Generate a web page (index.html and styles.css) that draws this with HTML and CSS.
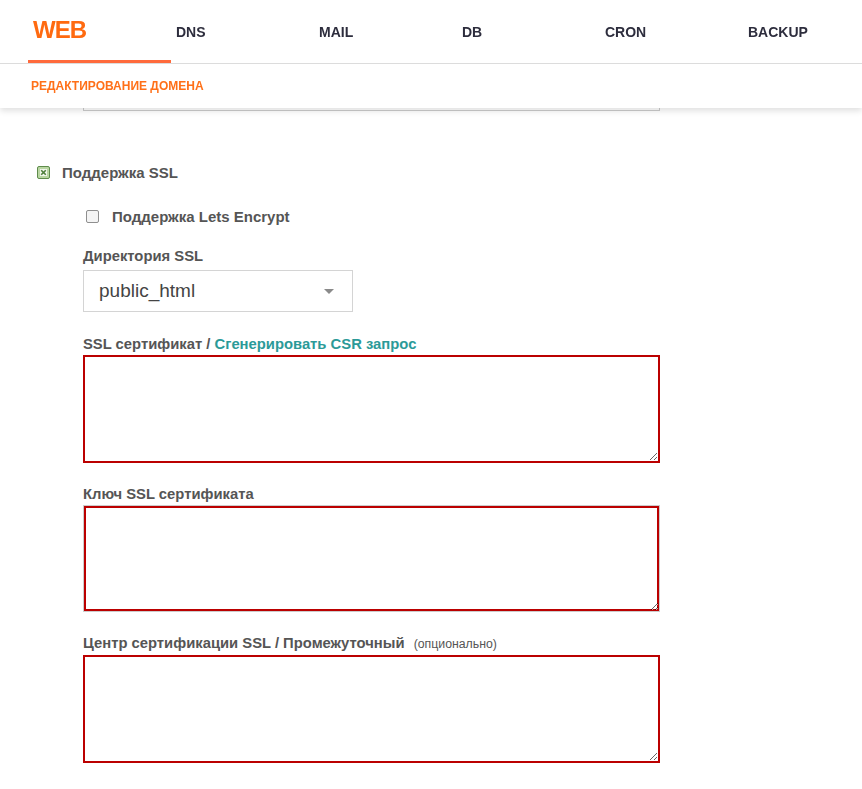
FILE: index.html
```html
<!DOCTYPE html>
<html>
<head>
  <meta charset="utf-8">
  <link rel="stylesheet" href="styles.css">
</head>
<body>
  <div class="header">
    <div class="tabs">
      <a class="tab active">WEB</a>
      <a class="tab">DNS</a>
      <a class="tab">MAIL</a>
      <a class="tab">DB</a>
      <a class="tab">CRON</a>
      <a class="tab">BACKUP</a>
    </div>
    <div class="subtitle">Редактирование домена</div>
  </div>

  <div class="content">
    <textarea class="field ghost"></textarea>

    <div class="check-row">
      <span class="check-green">
        <svg width="13" height="13" viewBox="0 0 13 13">
          <rect x="0.5" y="0.5" width="12" height="12" rx="1.5" fill="#b9d6a2" stroke="#5f8c4c"/>
          <rect x="3" y="3" width="7" height="7" fill="#f2f7ee"/>
          <path d="M4.2 4.2 L8.8 8.8 M8.8 4.2 L4.2 8.8" stroke="#4f7f3c" stroke-width="1.6"/>
        </svg>
      </span>
      <span class="check-label">Поддержка SSL</span>
    </div>

    <div class="ssl-box">
      <div class="check-row sub">
        <span class="check-empty"></span>
        <span class="check-label">Поддержка Lets Encrypt</span>
      </div>

      <div class="label first">Директория SSL</div>
      <div class="select">
        <span>public_html</span>
        <span class="caret"></span>
      </div>

      <div class="label after-select">SSL сертификат / <a class="link">Сгенерировать CSR запрос</a></div>
      <textarea class="field error"></textarea>

      <div class="label">Ключ SSL сертификата</div>
      <textarea class="field error-inset"></textarea>

      <div class="label">Центр сертификации SSL / Промежуточный <span class="optional">(опционально)</span></div>
      <textarea class="field error"></textarea>
    </div>
  </div>
</body>
</html>
```

FILE: styles.css
```css
body {
  margin: 0;
  font-family: "Liberation Sans", Arial, sans-serif;
  background: white;
  color: #555;
}

.header {
  position: fixed;
  top: 0;
  left: 0;
  right: 0;
  background: white;
  box-shadow: 0 3px 6px rgba(0, 0, 0, 0.12);
  z-index: 2;
}

.tabs {
  display: flex;
  padding-left: 28px;
  height: 63px;
  border-bottom: 1px solid #dcdcdc;
}

.tab {
  flex-shrink: 0;
  box-sizing: border-box;
  width: 143px;
  padding-left: 5px;
  line-height: 64px;
  font-size: 14px;
  font-weight: bold;
  color: #2d2d3d;
}

.tab.active {
  font-size: 24px;
  letter-spacing: -1px;
  color: #ff6a10;
  line-height: 60px;
  border-bottom: 3px solid #ff6a3c;
}

.subtitle {
  height: 44px;
  line-height: 44px;
  padding-left: 31px;
  font-size: 12px;
  font-weight: bold;
  text-transform: uppercase;
  color: #ff7018;
}

.content {
  padding-bottom: 40px;
}

.field {
  display: block;
  box-sizing: border-box;
  width: 577px;
  margin: 0;
  background: white;
  font-family: inherit;
}

.ghost {
  height: 111px;
  margin-left: 83px;
  border: 1px solid #ccc;
  resize: none;
}

.check-row {
  display: flex;
  align-items: center;
  height: 20px;
  margin-top: 51px;
  padding-left: 37px;
}

.check-row.sub {
  margin-top: 24px;
  padding-left: 3px;
}

.check-green {
  display: flex;
  width: 13px;
  height: 13px;
  margin-right: 12px;
}

.check-empty {
  box-sizing: border-box;
  width: 13px;
  height: 13px;
  border: 1px solid #8f8f8f;
  border-radius: 2px;
  background: #f4f4f4;
  margin-right: 13px;
}

.check-label {
  font-size: 15px;
  font-weight: bold;
  color: #555;
}

.ssl-box {
  padding-left: 83px;
}

.label {
  margin-top: 23px;
  margin-bottom: 2px;
  line-height: 17px;
  font-size: 14.8px;
  font-weight: bold;
  color: #555;
}

.label.first {
  margin-top: 22px;
  margin-bottom: 5px;
}

.label.after-select {
  margin-top: 24px;
}

.link {
  color: #2b9a98;
}

.optional {
  margin-left: 5px;
  font-size: 12.3px;
  font-weight: normal;
}

.select {
  display: flex;
  align-items: center;
  justify-content: space-between;
  box-sizing: border-box;
  width: 270px;
  height: 42px;
  padding: 0 18px 0 15px;
  border: 1px solid #d4d4d4;
  font-size: 19px;
  color: #444;
}

.caret {
  width: 0;
  height: 0;
  border-left: 5px solid transparent;
  border-right: 5px solid transparent;
  border-top: 5px solid #8a8a8a;
}

.error {
  height: 108px;
  border: 2px solid #bb0000;
}

.error-inset {
  height: 107px;
  border: 1px solid #ccc;
  box-shadow: inset 0 0 0 2px #bb0000;
}
```
